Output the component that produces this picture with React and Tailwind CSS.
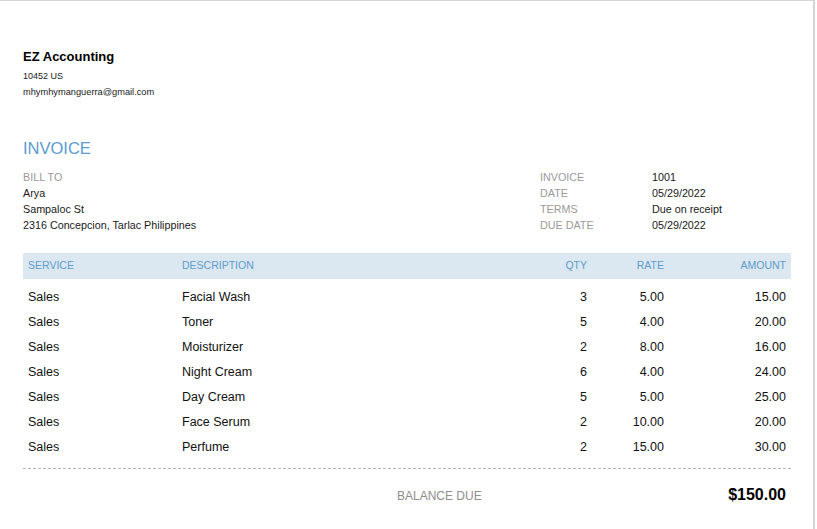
import React from "react";

const rows = [
  ["Sales", "Facial Wash", "3", "5.00", "15.00"],
  ["Sales", "Toner", "5", "4.00", "20.00"],
  ["Sales", "Moisturizer", "2", "8.00", "16.00"],
  ["Sales", "Night Cream", "6", "4.00", "24.00"],
  ["Sales", "Day Cream", "5", "5.00", "25.00"],
  ["Sales", "Face Serum", "2", "10.00", "20.00"],
  ["Sales", "Perfume", "2", "15.00", "30.00"],
];

const meta = [
  ["INVOICE", "1001"],
  ["DATE", "05/29/2022"],
  ["TERMS", "Due on receipt"],
  ["DUE DATE", "05/29/2022"],
];

export default function App() {
  return (
    <div className="w-[817px] h-[529px] bg-white overflow-hidden" style={{ fontFamily: '"Liberation Sans", Arial, sans-serif' }}>
      <div className="w-[815px] h-[529px] border-t border-r-2 border-[#d4d4d4] pl-[23px] pr-[22px] text-[#1a1a1a]">
        <div className="pt-[48px] text-[13px] leading-[16px] font-bold text-black">EZ Accounting</div>
        <div className="mt-[3px] text-[9px] leading-[16px]">10452 US</div>
        <div className="text-[9.25px] leading-[16px]">mhymhymanguerra@gmail.com</div>

        <div className="mt-[38px] text-[16.5px] leading-[20px] text-[#5b9bcf]">INVOICE</div>

        <div className="mt-[11px] flex text-[10.75px] leading-[16px]">
          <div className="w-[517px]">
            <div className="text-[#9a9a9a]">BILL TO</div>
            <div>Arya</div>
            <div>Sampaloc St</div>
            <div>2316 Concepcion, Tarlac Philippines</div>
          </div>
          <div className="grid grid-cols-[112px_1fr]">
            {meta.map(([k, v]) => (
              <React.Fragment key={k}>
                <div className="text-[#9a9a9a]">{k}</div>
                <div>{v}</div>
              </React.Fragment>
            ))}
          </div>
        </div>

        <div className="mt-[20px] w-[768px]">
          <div className="grid grid-cols-[154px_1fr_80px_77px_122px] h-[26px] items-center bg-[#dce8f1] text-[10.5px] text-[#5c9bcb]">
            <div className="pl-[5px]">SERVICE</div>
            <div className="pl-[5px]">DESCRIPTION</div>
            <div className="text-right pr-[5px]">QTY</div>
            <div className="text-right pr-[5px]">RATE</div>
            <div className="text-right pr-[5px]">AMOUNT</div>
          </div>
          <div className="pt-[6px]">
            {rows.map((r, i) => (
              <div key={i} className="grid grid-cols-[154px_1fr_80px_77px_122px] h-[25px] items-center text-[12.5px] text-[#111]">
                <div className="pl-[5px]">{r[0]}</div>
                <div className="pl-[5px]">{r[1]}</div>
                <div className="text-right pr-[5px]">{r[2]}</div>
                <div className="text-right pr-[5px]">{r[3]}</div>
                <div className="text-right pr-[5px]">{r[4]}</div>
              </div>
            ))}
          </div>
          <div className="mt-[8px] border-t border-dashed border-[#b5b5b5]"></div>
          <div className="mt-[16px] flex items-baseline">
            <div className="ml-[374px] text-[12px] text-[#8e8e8e]">BALANCE DUE</div>
            <div className="flex-1 text-right pr-[5px] text-[16px] leading-[20px] font-bold text-black">$150.00</div>
          </div>
        </div>
      </div>
    </div>
  );
}
